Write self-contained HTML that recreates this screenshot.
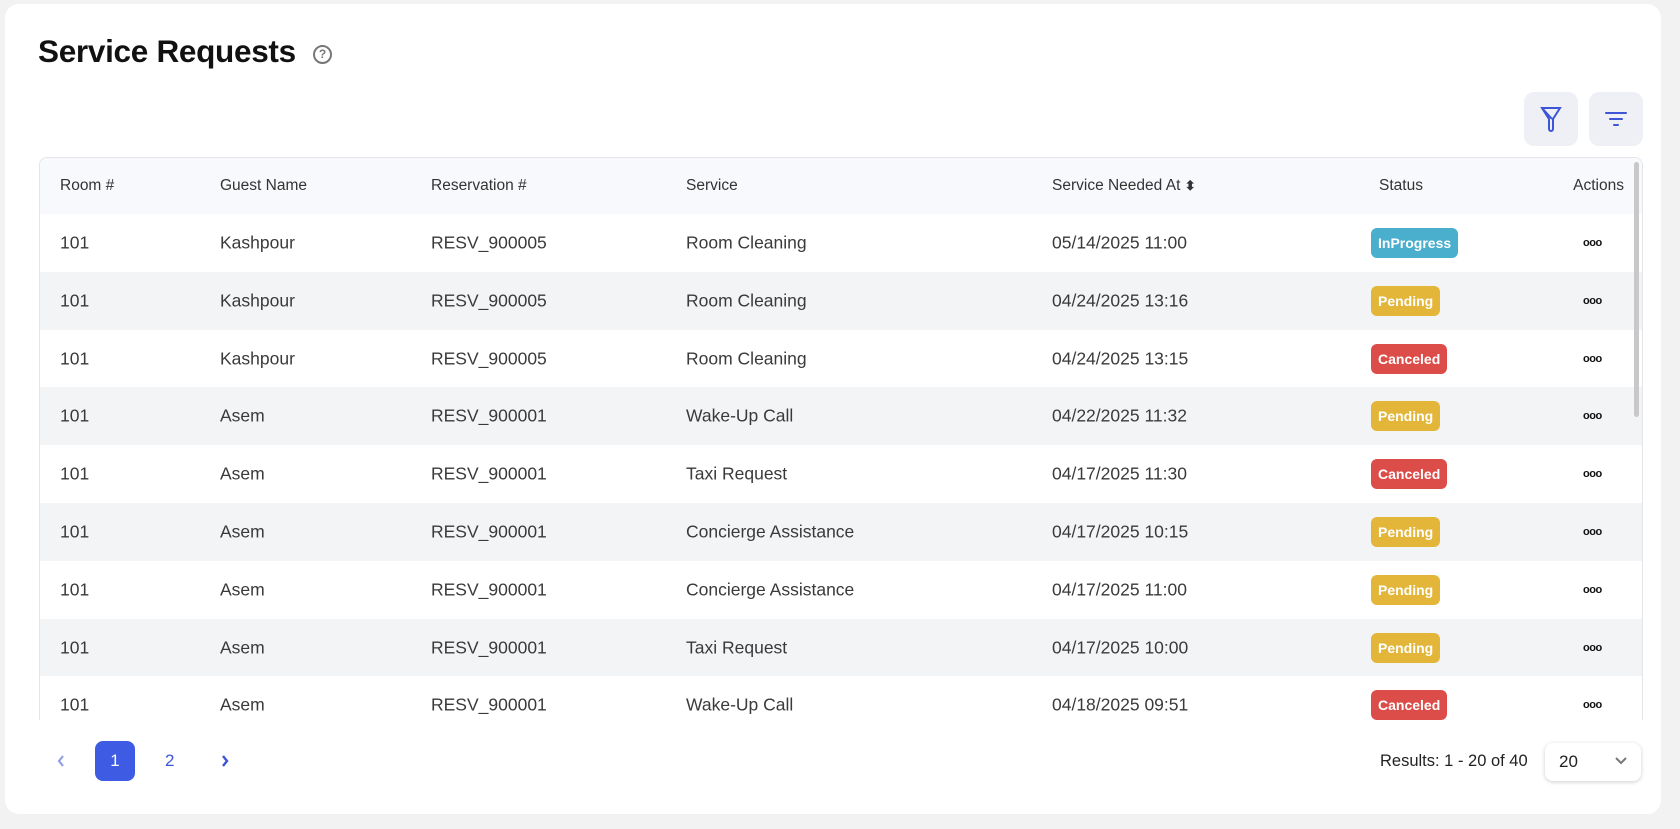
<!DOCTYPE html>
<html><head><meta charset="utf-8"><style>
*{box-sizing:border-box;margin:0;padding:0}
body{width:1680px;height:829px;background:#f2f2f2;font-family:"Liberation Sans",sans-serif;color:#222;overflow:hidden;position:relative}
.card{position:absolute;left:5px;top:4px;width:1656px;height:810px;background:#fff;border-radius:14px}
h1{position:absolute;left:38px;top:33px;font-size:31.5px;font-weight:bold;color:#111;letter-spacing:-0.3px}
.help{position:absolute;left:313px;top:45px;width:19px;height:19px;border:2px solid #777;border-radius:50%;font-size:12px;font-weight:bold;color:#777;text-align:center;line-height:15px}
.btn{position:absolute;top:92px;width:54px;height:54px;background:#eef0f6;border-radius:10px;display:flex;align-items:center;justify-content:center}
.table{position:absolute;left:39px;top:157px;width:1604px;height:563px;border:1px solid #e3e5ea;border-bottom:none;border-radius:8px 8px 0 0;overflow:hidden}
.row{position:absolute;left:0;width:1604px;height:58px;font-size:17.5px;color:#3a3a3a}
.row span{position:absolute;top:50%;transform:translateY(-50%)}
.hdr{top:0;height:56px;background:#f8f9fc;font-size:15.5px;color:#333}
.badge{color:#fff;font-weight:bold;font-size:14px;padding:7px 7px;border-radius:6px}
.ip{background:#4aaecd}.pe{background:#e3b63a}.ca{background:#dc4d4a}
.dots{font-size:11px;font-weight:bold;letter-spacing:-0.5px;color:#111}
.sb{position:absolute;left:1594px;top:4px;width:5px;height:255px;background:#c8c8c8;border-radius:3px}
</style></head><body>
<div class="card"></div>
<h1>Service Requests</h1>
<div class="help">?</div>
<div class="btn" style="left:1524px"><svg width="24" height="28" viewBox="0 0 24 28" fill="none" stroke="#3d55d6" stroke-width="2"><path d="M3 3h18l-7 11v10a2 2 0 0 1-4 0V14z"/><path d="M3 3l10 11"/></svg></div>
<div class="btn" style="left:1589px"><svg width="24" height="20" viewBox="0 0 24 20" stroke="#3d55d6" stroke-width="2" stroke-linecap="round"><path d="M2 4h20M6 10h12M10 16h4"/></svg></div>
<div class="table">
<div class="row hdr"><span style="left:20px">Room #</span><span style="left:180px">Guest Name</span><span style="left:391px">Reservation #</span><span style="left:646px">Service</span><span style="left:1012px">Service Needed At <b style="font-size:13px">⬍</b></span><span style="left:1339px">Status</span><span style="right:20px">Actions</span></div>
<div class="sb"></div>
</div>
<script>
var d=[["Kashpour","RESV_900005","Room Cleaning","05/14/2025 11:00","InProgress","ip"],
["Kashpour","RESV_900005","Room Cleaning","04/24/2025 13:16","Pending","pe"],
["Kashpour","RESV_900005","Room Cleaning","04/24/2025 13:15","Canceled","ca"],
["Asem","RESV_900001","Wake-Up Call","04/22/2025 11:32","Pending","pe"],
["Asem","RESV_900001","Taxi Request","04/17/2025 11:30","Canceled","ca"],
["Asem","RESV_900001","Concierge Assistance","04/17/2025 10:15","Pending","pe"],
["Asem","RESV_900001","Concierge Assistance","04/17/2025 11:00","Pending","pe"],
["Asem","RESV_900001","Taxi Request","04/17/2025 10:00","Pending","pe"],
["Asem","RESV_900001","Wake-Up Call","04/18/2025 09:51","Canceled","ca"]];
var t=document.querySelector('.table'),h='';
d.forEach(function(r,i){h+='<div class="row" style="top:'+(56+i*57.8)+'px;background:'+(i%2?'#f3f4f6':'#fff')+'"><span style="left:20px">101</span><span style="left:180px">'+r[0]+'</span><span style="left:391px">'+r[1]+'</span><span style="left:646px">'+r[2]+'</span><span style="left:1012px">'+r[3]+'</span><span class="badge '+r[5]+'" style="left:1331px">'+r[4]+'</span><span class="dots" style="left:1543px">ooo</span></div>'});
t.insertAdjacentHTML('afterbegin',h);
</script>
<svg style="position:absolute;left:56px;top:754px" width="10" height="14" viewBox="0 0 10 14" fill="none" stroke="#8a9ae6" stroke-width="2"><path d="M7 2L3 7l4 5"/></svg>
<div style="position:absolute;left:95px;top:741px;width:40px;height:40px;background:#3d5be3;border-radius:8px;color:#fff;font-size:17px;text-align:center;line-height:40px">1</div>
<div style="position:absolute;left:165px;top:751px;color:#3d55d6;font-size:17px">2</div>
<svg style="position:absolute;left:220px;top:754px" width="10" height="14" viewBox="0 0 10 14" fill="none" stroke="#3d55d6" stroke-width="2.4"><path d="M3 2l4 5-4 5"/></svg>
<div style="position:absolute;left:1380px;top:752px;font-size:16.5px;color:#222">Results: 1 - 20 of 40</div>
<div style="position:absolute;left:1545px;top:743px;width:96px;height:38px;border-radius:8px;background:#fff;box-shadow:0 1px 4px rgba(0,0,0,.2);font-size:17px;padding:9px 14px">20<svg style="position:absolute;right:14px;top:14px" width="12" height="8" viewBox="0 0 12 8" fill="none" stroke="#777" stroke-width="2"><path d="M1 1l5 5 5-5"/></svg></div>
</body></html>
